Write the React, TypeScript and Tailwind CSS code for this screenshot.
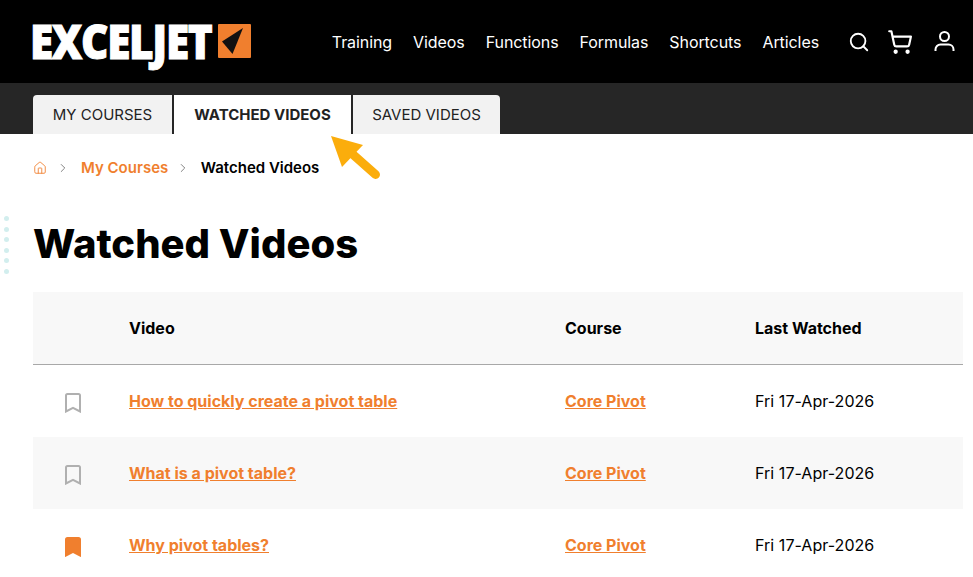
import { ChevronRight, House, Search, ShoppingCart } from "lucide-react";

const navLinks = ["Training", "Videos", "Functions", "Formulas", "Shortcuts", "Articles"];

const rows = [
  { title: "How to quickly create a pivot table", saved: false },
  { title: "What is a pivot table?", saved: false },
  { title: "Why pivot tables?", saved: true },
];

function Bookmark({ saved }: { saved: boolean }) {
  return (
    <svg width="16" height="20" viewBox="0 0 16 20" className="block">
      <path
        d="M1 18.5V2.5A1.5 1.5 0 0 1 2.5 1h11A1.5 1.5 0 0 1 15 2.5v16l-7-3.6z"
        fill={saved ? "#f07f2e" : "none"}
        stroke={saved ? "#f07f2e" : "#b0b0b0"}
        strokeWidth="2"
      />
    </svg>
  );
}

function Logo() {
  return (
    <div className="flex items-start">
      <div className="w-[180px] h-[35px]">
        <div className="font-['Open_Sans',sans-serif] font-extrabold text-[47px] leading-[35px] text-white tracking-[-1.5px] whitespace-nowrap scale-x-[0.9] origin-left -ml-[3px] [-webkit-text-stroke:1px_white]">
          EXCELJET
        </div>
      </div>
      <div className="w-[33px] h-[34px] bg-[#f07f2e] rounded-[1px] ml-[5px]">
        <svg width="33" height="34" viewBox="0 0 33 34">
          <path d="M25 4 L4 17.5 L14.5 30 Z" fill="#111" />
        </svg>
      </div>
    </div>
  );
}

function UserIcon() {
  return (
    <svg width="21" height="21" viewBox="0 0 21 21" fill="none" stroke="white" strokeWidth="2">
      <circle cx="10.5" cy="5.5" r="4.5" />
      <path d="M1.5 20v-1.5a5 5 0 0 1 5-5h8a5 5 0 0 1 5 5V20" />
    </svg>
  );
}

export default function App() {
  return (
    <div className="relative h-[577px] w-[973px] overflow-hidden bg-white font-['Inter',sans-serif] text-black">
      {/* Top bar */}
      <header className="h-[83px] bg-black flex items-center pl-[33px] pr-[18px]">
        <Logo />
        <nav className="ml-auto flex gap-[21px] text-base text-white tracking-[-0.08px]">
          {navLinks.map((link) => (
            <span key={link}>{link}</span>
          ))}
        </nav>
        <div className="ml-[29px] flex items-center text-white">
          <Search size={22} strokeWidth={2} />
          <ShoppingCart size={26} strokeWidth={2} className="ml-[17px]" />
          <span className="ml-[21px]">
            <UserIcon />
          </span>
        </div>
      </header>

      {/* Tabs */}
      <div className="h-[51px] bg-[#262626] pl-[33px] pt-[12px] flex items-end">
        <div className="flex h-[39px] gap-[2px] text-[15px]">
          <div className="w-[139px] pt-[1px] bg-[#f2f2f2] rounded-tl-[4px] flex items-center justify-center text-[#222]">
            MY COURSES
          </div>
          <div className="w-[177px] pt-[1px] bg-white flex items-center justify-center font-bold text-[#222]">
            WATCHED VIDEOS
          </div>
          <div className="w-[147px] pt-[1px] bg-[#f2f2f2] rounded-tr-[4px] flex items-center justify-center text-[#222]">
            SAVED VIDEOS
          </div>
        </div>
      </div>

      {/* Breadcrumb */}
      <div className="h-[67px] pl-[33px] pt-[1px] flex items-center text-[15px] font-semibold">
        <House size={14} strokeWidth={1.5} className="text-[#f07f2e]" />
        <ChevronRight size={14} strokeWidth={1.25} className="ml-[9px] text-[#555]" />
        <span className="ml-[11px] text-[#f07f2e]">My Courses</span>
        <ChevronRight size={14} strokeWidth={1.25} className="ml-[8px] text-[#555]" />
        <span className="ml-[10.5px]">Watched Videos</span>
      </div>

      <h1 className="pl-[33px] mt-[18px] text-[40px] leading-[50px] font-extrabold">Watched Videos</h1>

      {/* Table */}
      <div className="ml-[33px] mr-[10px] mt-[23px] text-base">
        <div className="h-[73px] bg-[#f8f8f8] border-b border-[#a8a8a8] grid grid-cols-[96px_436px_190px_1fr] items-center font-bold">
          <span />
          <span>Video</span>
          <span>Course</span>
          <span>Last Watched</span>
        </div>
        {rows.map((row, i) => (
          <div
            key={row.title}
            className={`h-[72px] grid grid-cols-[96px_436px_190px_1fr] items-center ${i % 2 === 1 ? "bg-[#f8f8f8]" : "bg-white"}`}
          >
            <span className="pl-[32px] pt-[3px]">
              <Bookmark saved={row.saved} />
            </span>
            <span className="font-bold text-[#f07f2e] underline">{row.title}</span>
            <span className="font-bold text-[#f07f2e] underline">Core Pivot</span>
            <span className="tracking-[0.05px]">Fri 17-Apr-2026</span>
          </div>
        ))}
      </div>

      {/* Callout arrow */}
      <svg width="52" height="52" viewBox="0 0 52 52" className="absolute left-[331px] top-[134px]">
        <path d="M44.5 40.5 L18 17" stroke="#fbad0c" strokeWidth="9" strokeLinecap="round" />
        <path d="M0 2 L32 11 L11 33 Z" fill="#fbad0c" />
      </svg>

      {/* Decorative dots */}
      <div className="absolute left-[3.5px] top-[216px] flex flex-col gap-[5.6px]">
        {[0, 1, 2, 3, 4, 5].map((n) => (
          <div key={n} className="w-[5px] h-[5px] rounded-full bg-[#d2eeee]" />
        ))}
      </div>
    </div>
  );
}
